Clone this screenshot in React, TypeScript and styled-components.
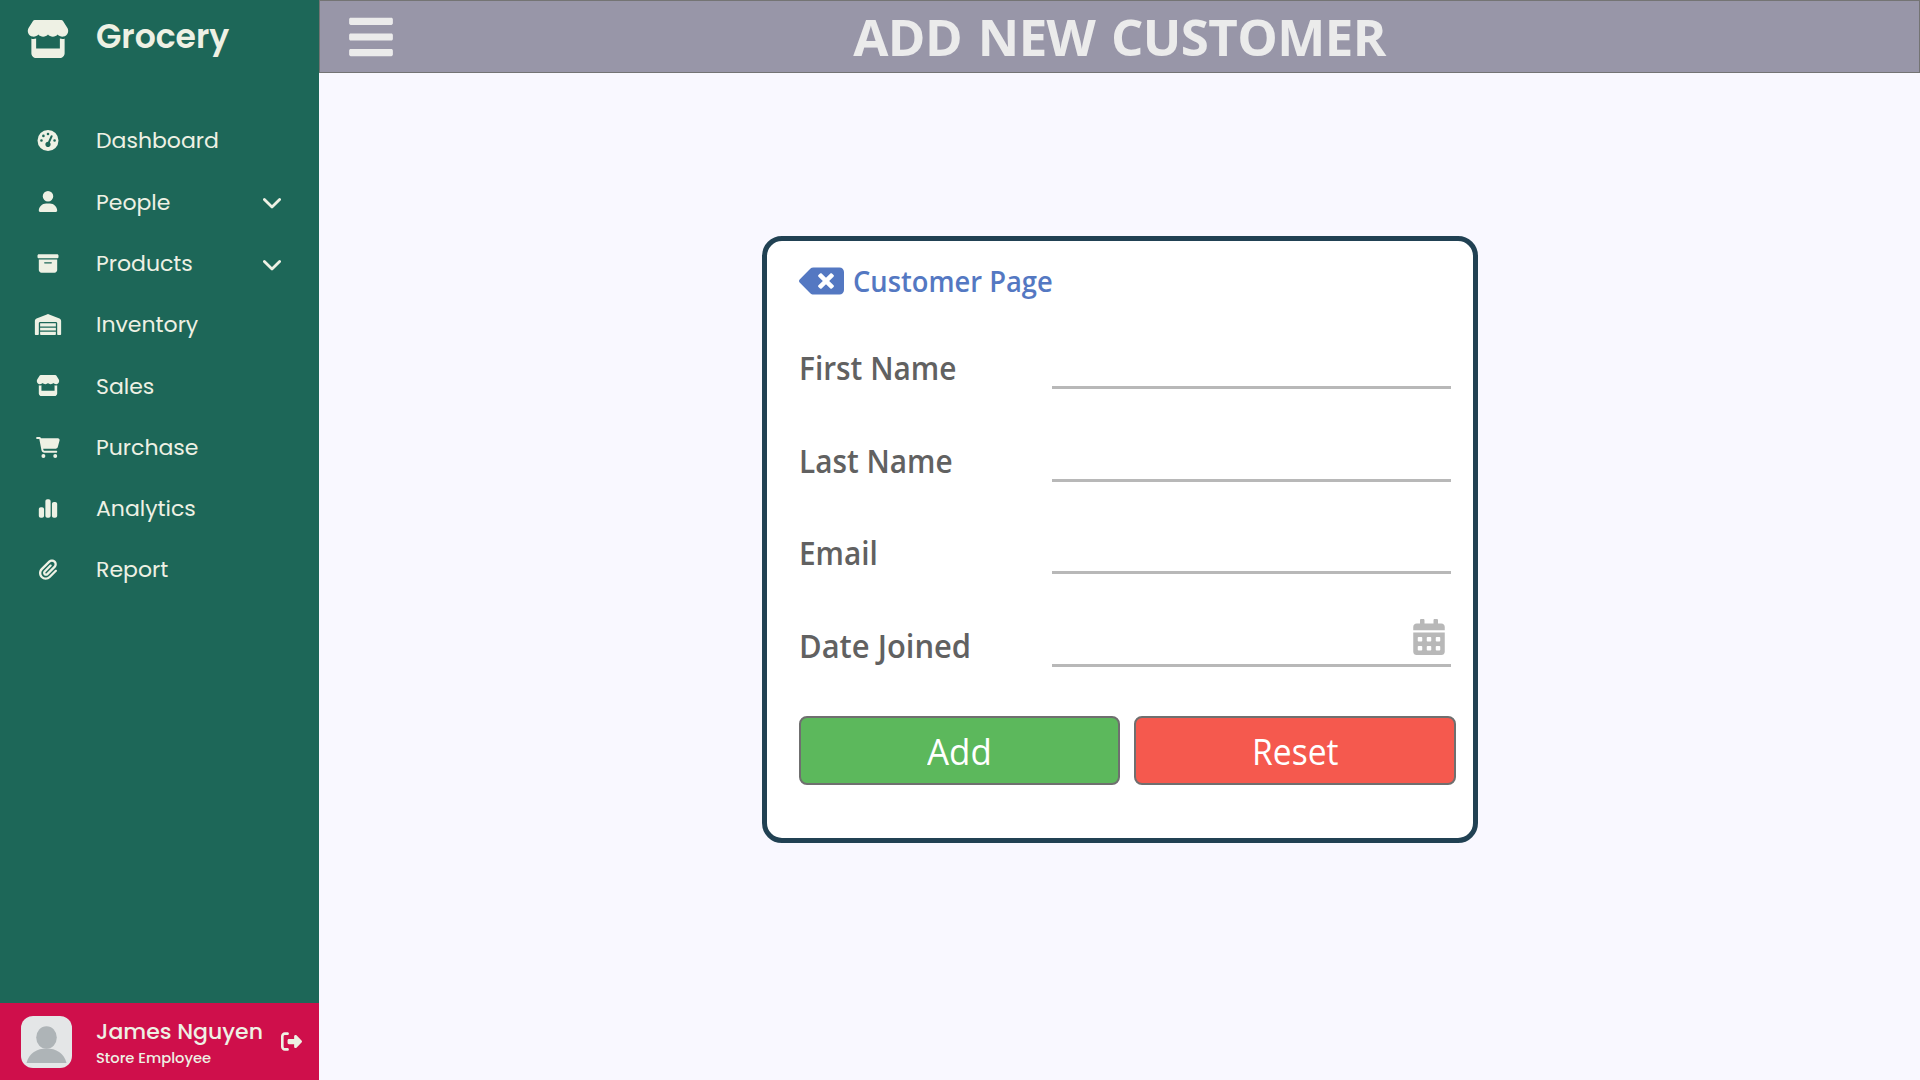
import React from "react";
import styled, { createGlobalStyle } from "styled-components";
import {
  FaStore, FaGaugeHigh, FaUser, FaBoxArchive, FaWarehouse, FaCartShopping,
  FaChartSimple, FaPaperclip, FaRightFromBracket,
} from "react-icons/fa6";
import { FaBackspace, FaBars, FaCalendarAlt } from "react-icons/fa";

const brandFont = `Poppins, Lato, sans-serif`;
const bodyFont = `"Segoe UI", "Open Sans", "Noto Sans", sans-serif`;

const GlobalStyle = createGlobalStyle`
  *, *::before, *::after { box-sizing: border-box; }
  body { margin: 0; background: #f9f8ff; font-family: ${bodyFont}; }
`;

const Shell = styled.div`
  display: grid;
  grid-template-columns: 319px 1fr;
  width: 1920px;
  height: 1080px;
  overflow: hidden;
`;

const Sidebar = styled.aside`
  display: flex;
  flex-direction: column;
  background: #1d6758;
  color: #eef1e4;
  font-family: ${brandFont};
`;

const IconCell = styled.span<{ $size: number }>`
  display: flex;
  align-items: center;
  justify-content: center;
  width: 96px;
  flex: none;
  font-size: ${(p) => p.$size}px;
  svg { width: 96px; height: 1em; }
`;

const Brand = styled.div`
  display: flex;
  align-items: center;
  height: 78px;
  margin-bottom: 32px;
`;

const BrandName = styled.span`
  font-size: 33px;
  font-weight: 600;
  line-height: 40px;
  padding-bottom: 4px;
`;

const Menu = styled.ul`
  display: flex;
  flex-direction: column;
  flex: 1;
  margin: 0;
  padding: 0;
  list-style: none;
`;

const MenuItem = styled.li`
  display: flex;
  align-items: center;
  height: 61.3px;
`;

const MenuLabel = styled.span`
  flex: 1;
  padding-top: 1.5px;
  font-size: 22px;
  line-height: 30px;
`;

const ChevronMark = styled.svg`
  width: 18px;
  height: 11px;
  margin: 4px 38.5px 0 0;
  fill: none;
  stroke: currentColor;
  stroke-width: 2.8;
  stroke-linecap: round;
  stroke-linejoin: round;
`;

const Profile = styled.footer`
  display: flex;
  align-items: center;
  height: 77px;
  background: #cf0f4b;
`;

const AvatarCell = styled.div`
  width: 96px;
  padding-left: 21px;
  flex: none;
  svg { display: block; border-radius: 12px; }
`;

const Person = styled.div`
  flex: 1;
  padding-top: 2px;
  white-space: nowrap;
`;

const PersonName = styled.div`
  font-size: 22px;
  font-weight: 500;
  line-height: 31px;
`;

const PersonRole = styled.div`
  font-size: 14.7px;
  font-weight: 500;
  line-height: 22px;
`;

const SignOut = styled(FaRightFromBracket)`
  width: 21px;
  height: 21px;
  margin-right: 17px;
  flex: none;
`;

const Main = styled.main`
  display: flex;
  flex-direction: column;
  align-items: center;
`;

const TopBar = styled.header`
  display: grid;
  grid-template-columns: 100px 1fr 100px;
  align-items: center;
  width: 100%;
  height: 73px;
  border: 1px solid #747474;
  background: #9896a8;
  color: #ebebeb;
`;

const MenuToggle = styled(FaBars)`
  width: 44px;
  height: 50px;
  margin-left: 29px;
`;

const Title = styled.h1`
  margin: 0;
  text-align: center;
  font-size: 51px;
  font-weight: 700;
  line-height: 69px;
  letter-spacing: -0.6px;
  word-spacing: 3px;
  white-space: nowrap;
`;

const Condensed = styled.span<{ $scale: number; $origin?: string }>`
  display: inline-block;
  transform: scaleX(${(p) => p.$scale});
  transform-origin: ${(p) => p.$origin ?? "left"} center;
`;

const Card = styled.form`
  display: flex;
  flex-direction: column;
  width: 716px;
  height: 607px;
  margin-top: 163px;
  padding: 26px 17px 0 32px;
  border: 5px solid #214153;
  border-radius: 20px;
  background: #fff;
`;

const BackLink = styled.a`
  display: flex;
  align-items: flex-start;
  gap: 9px;
  height: 66px;
  color: #5478c2;
  font-size: 29px;
  font-weight: 600;
  line-height: 28px;
`;

const BackIcon = styled(FaBackspace)`
  width: 45px;
  height: 36px;
  margin-top: -4.5px;
`;

const Field = styled.label`
  display: grid;
  grid-template-columns: 253.4px 399.4px;
  height: 92.5px;
`;

const FieldLabel = styled.span`
  align-self: start;
  padding: 15px 0 0 0.5px;
  color: #616161;
  font-size: 32px;
  font-weight: 600;
  line-height: 40px;
`;

const FieldBox = styled.span`
  display: flex;
  align-items: center;
  align-self: start;
  justify-content: flex-end;
  height: 56px;
  padding-right: 4px;
  border-bottom: 3px solid #b8b8b8;
  color: #b8b8b8;
`;

const Actions = styled.div`
  display: flex;
  gap: 14px;
  margin-top: 13px;
`;

const ActionButton = styled.button<{ $fill: string }>`
  flex: 1;
  height: 68.5px;
  padding: 3px 0 0 1px;
  border: 2px solid #6f6f6f;
  border-radius: 8px;
  background: ${(p) => p.$fill};
  color: #fff;
  font-family: ${bodyFont};
  font-size: 36px;
`;

const menu = [
  { label: "Dashboard", Icon: FaGaugeHigh },
  { label: "People", Icon: FaUser, expandable: true },
  { label: "Products", Icon: FaBoxArchive, expandable: true },
  { label: "Inventory", Icon: FaWarehouse },
  { label: "Sales", Icon: FaStore },
  { label: "Purchase", Icon: FaCartShopping },
  { label: "Analytics", Icon: FaChartSimple },
  { label: "Report", Icon: FaPaperclip },
];

const fields = [
  { label: "First Name", scale: 0.932 },
  { label: "Last Name", scale: 0.93 },
  { label: "Email", scale: 0.93 },
  { label: "Date Joined", scale: 0.966, date: true },
];

const Avatar = () => (
  <svg width="51" height="52" viewBox="0 0 51 52">
    <rect width="51" height="52" fill="#e4e6e7" />
    <ellipse cx="25.5" cy="21.5" rx="10.3" ry="11.3" fill="#aeb4b7" />
    <path d="M5.5 47C8 37 16 32.500 25.500 32.500S43 37 45.500 47Z" fill="#aeb4b7" />
  </svg>
);

export default function App() {
  return (
    <>
      <GlobalStyle />
      <Shell>
        <Sidebar>
          <Brand>
            <IconCell $size={38}><FaStore /></IconCell>
            <BrandName>Grocery</BrandName>
          </Brand>
          <Menu>
            {menu.map(({ label, Icon, expandable }) => (
              <MenuItem key={label}>
                <IconCell $size={21}><Icon /></IconCell>
                <MenuLabel>{label}</MenuLabel>
                {expandable && (
                  <ChevronMark viewBox="0 0 18 11">
                    <path d="M1.4 1.5L9 9L16.6 1.5" />
                  </ChevronMark>
                )}
              </MenuItem>
            ))}
          </Menu>
          <Profile>
            <AvatarCell><Avatar /></AvatarCell>
            <Person>
              <PersonName>James Nguyen</PersonName>
              <PersonRole>Store Employee</PersonRole>
            </Person>
            <SignOut />
          </Profile>
        </Sidebar>
        <Main>
          <TopBar>
            <MenuToggle />
            <Title>ADD NEW CUSTOMER</Title>
          </TopBar>
          <Card>
            <BackLink>
              <BackIcon />
              <Condensed $scale={0.942}>Customer Page</Condensed>
            </BackLink>
            {fields.map(({ label, scale, date }) => (
              <Field key={label}>
                <FieldLabel><Condensed $scale={scale}>{label}</Condensed></FieldLabel>
                <FieldBox>{date && <FaCalendarAlt size={36} />}</FieldBox>
              </Field>
            ))}
            <Actions>
              <ActionButton type="button" $fill="#5cb85c">
                <Condensed $scale={0.97} $origin="center">Add</Condensed>
              </ActionButton>
              <ActionButton type="button" $fill="#f5594e">
                <Condensed $scale={0.933} $origin="center">Reset</Condensed>
              </ActionButton>
            </Actions>
          </Card>
        </Main>
      </Shell>
    </>
  );
}
